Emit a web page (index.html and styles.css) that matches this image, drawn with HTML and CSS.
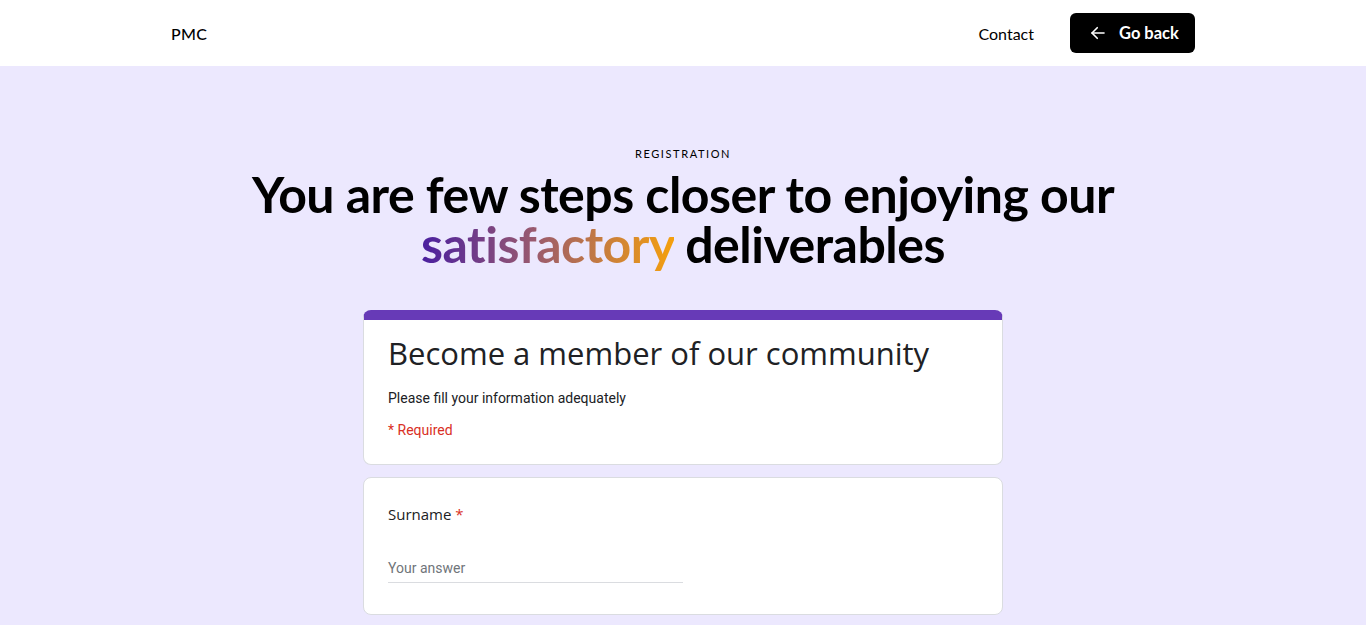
FILE: index.html
```html
<!DOCTYPE html>
<html lang="en">
<head>
<meta charset="utf-8">
<title>PMC Registration</title>
<link rel="stylesheet" href="styles.css">
</head>
<body>
<header class="topbar">
  <div class="container nav">
    <div class="brand">PMC</div>
    <div class="nav-right">
      <a class="nav-link" href="#">Contact</a>
      <a class="btn-back" href="#">
        <svg width="18" height="18" viewBox="0 0 24 24" fill="none" stroke="#fff" stroke-width="2.2" stroke-linecap="round" stroke-linejoin="round"><path d="M20 12H4"/><path d="M11 5l-7 7 7 7"/></svg>
        <span>Go back</span>
      </a>
    </div>
  </div>
</header>
<main class="hero">
  <p class="eyebrow">REGISTRATION</p>
  <h1 class="headline"><span class="line">You are few steps closer to enjoying our</span><span class="line"><span class="grad">satisfactory</span> deliverables</span></h1>
  <section class="form">
    <div class="card card-head">
      <h2 class="form-title">Become a member of our community</h2>
      <p class="form-desc">Please fill your information adequately</p>
      <p class="req">* Required</p>
    </div>
    <div class="card card-q">
      <label class="q-label">Surname <span class="star">*</span></label>
      <div class="answer">Your answer</div>
    </div>
  </section>
</main>
</body>
</html>
```
FILE: styles.css
```css
* { box-sizing: border-box; }
html, body { margin: 0; padding: 0; }
body {
  background: #ece8fe;
  font-family: "Lato", "Open Sans", sans-serif;
  color: #000;
}
.topbar { background: #fff; height: 66px; }
.container { max-width: 1024px; margin: 0 auto; }
.nav { display: flex; align-items: center; justify-content: space-between; height: 66px; }
.brand { font-size: 16px; font-weight: 500; letter-spacing: 0.3px; }
.nav-right { display: flex; align-items: center; gap: 36px; }
.nav-link { color: #000; text-decoration: none; font-size: 16px; }
.btn-back {
  display: flex; align-items: center; gap: 12px;
  background: #000; color: #fff; text-decoration: none;
  height: 40px; width: 125px; border-radius: 6px;
  padding-left: 19px; font-weight: 700; font-size: 16.5px;
}
.hero { display: flex; flex-direction: column; align-items: center; padding-top: 81px; }
.eyebrow { margin: 0; font-size: 11px; letter-spacing: 1.6px; line-height: 14px; }
.headline {
  margin: 8px 0 0; text-align: center; font-weight: 700; font-size: 50px;
  line-height: 50px; letter-spacing: -0.5px;
  display: flex; flex-direction: column; align-items: center;
}
.line { display: block; height: 50px; }
.grad {
  background: linear-gradient(90deg, #4a1fa0 0%, #9a5a6e 45%, #f5a00d 100%);
  -webkit-background-clip: text; background-clip: text; color: transparent;
}
.form { width: 640px; margin-top: 41px; display: flex; flex-direction: column; gap: 12px; }
.card { background: #fff; border: 1px solid #dadce0; border-radius: 8px; padding: 0 24px; }
.card-head { border-top: 10px solid #673ab7; padding-top: 12px; padding-bottom: 24px; height: 155px; }
.form-title {
  margin: 0; font-family: "Open Sans", sans-serif; font-weight: 400; font-size: 31px;
  line-height: 42px; color: #202124; letter-spacing: 0;
}
.form-desc { margin: 14px 0 0; font-family: "Roboto", sans-serif; font-size: 14px; line-height: 20px; color: #202124; }
.req { margin: 12px 0 0; font-family: "Roboto", sans-serif; font-size: 14px; line-height: 20px; color: #d93025; }
.card-q { height: 138px; padding-top: 26px; }
.q-label { display: block; font-family: "Open Sans", sans-serif; font-size: 15px; line-height: 20px; color: #202124; }
.star { color: #d93025; }
.answer {
  margin-top: 34px; width: 295px; border-bottom: 1px solid #dadce0;
  font-family: "Roboto", sans-serif; font-size: 14px; line-height: 20px; color: #70757a; padding-bottom: 4px;
}
```
